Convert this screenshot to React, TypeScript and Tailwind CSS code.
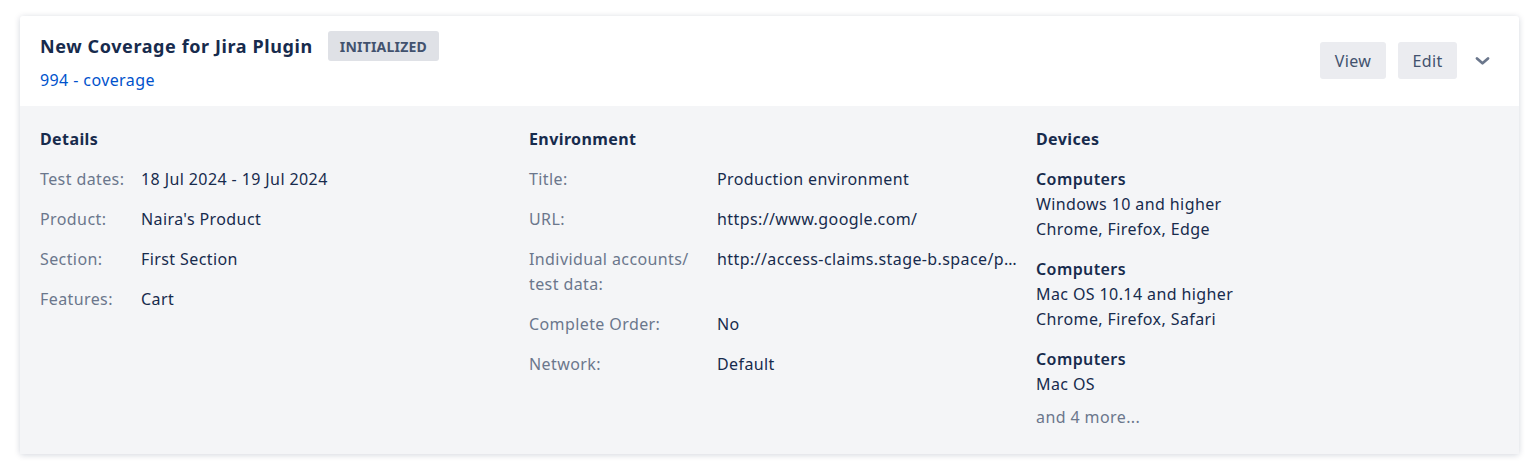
import React from 'react';

const details = [
  ['Test dates:', '18 Jul 2024 - 19 Jul 2024'],
  ['Product:', "Naira's Product"],
  ['Section:', 'First Section'],
  ['Features:', 'Cart'],
];

const environment = [
  ['Title:', 'Production environment'],
  ['URL:', 'https://www.google.com/'],
  ['Individual accounts/ test data:', 'http://access-claims.stage-b.space/pages/login?user=test'],
  ['Complete Order:', 'No'],
  ['Network:', 'Default'],
];

const devices = [
  { type: 'Computers', lines: ['Windows 10 and higher', 'Chrome, Firefox, Edge'] },
  { type: 'Computers', lines: ['Mac OS 10.14 and higher', 'Chrome, Firefox, Safari'] },
  { type: 'Computers', lines: ['Mac OS'] },
];

const App = () => {
  return (
    <div className="min-h-[465px] bg-white pl-5 pr-[17px] pt-4 font-['Noto_Sans',sans-serif] text-[#172b4d]">
      <div className="rounded-[3px] bg-white shadow-[0_1px_6px_rgba(9,30,66,0.18)]">
        {/* header */}
        <div className="flex items-center justify-between pl-5 pr-[29px] pt-[15px] pb-[13px]">
          <div>
            <div className="flex h-[30px] items-center">
              <h2 className="text-[18px] font-bold leading-[25px] tracking-[0.6px]">New Coverage for Jira Plugin</h2>
              <span className="ml-[15px] flex h-[30px] items-center rounded-[3px] bg-[#dfe1e6] px-[12px] text-[14px] font-bold uppercase tracking-[0.2px] text-[#42526e]">
                Initialized
              </span>
            </div>
            <a href="#" className="mt-[7px] block text-[16px] leading-[25px] tracking-[0.4px] text-[#0052cc]">
              994 - coverage
            </a>
          </div>
          <div className="mb-[3px] flex items-center">
            <button className="h-[37px] w-[66px] rounded-[3px] bg-[#ebecf0] text-[16px] tracking-[0.4px] text-[#42526e]">View</button>
            <button className="ml-3 h-[37px] w-[59px] rounded-[3px] bg-[#ebecf0] text-[16px] tracking-[0.4px] text-[#42526e]">Edit</button>
            <svg className="ml-[18px]" width="15" height="10" viewBox="0 0 15 10" fill="none">
              <path d="M2 2.5 L7.5 7.2 L13 2.5" stroke="#6b778c" strokeWidth="2.8" strokeLinecap="round" strokeLinejoin="round" />
            </svg>
          </div>
        </div>

        {/* body */}
        <div className="flex bg-[#f4f5f7] pl-5 pr-5 pt-[21px] pb-[24px] text-[16px] leading-[25px] tracking-[0.4px]">
          <div className="w-[489px] shrink-0 pr-5">
            <h3 className="font-bold">Details</h3>
            <div className="mt-[15px] flex flex-col gap-[15px]">
              {details.map(([label, value]) => (
                <div key={label} className="flex">
                  <span className="w-[101px] shrink-0 text-[#6b778c]">{label}</span>
                  <span>{value}</span>
                </div>
              ))}
            </div>
          </div>

          <div className="w-[507px] shrink-0 pr-4">
            <h3 className="font-bold">Environment</h3>
            <div className="mt-[15px] flex flex-col gap-[15px]">
              {environment.map(([label, value]) => (
                <div key={label} className="flex">
                  <span className="w-[188px] shrink-0 pr-4 text-[#6b778c]">{label}</span>
                  <span className="min-w-0 flex-1 truncate">{value}</span>
                </div>
              ))}
            </div>
          </div>

          <div className="flex-1">
            <h3 className="font-bold">Devices</h3>
            <div className="mt-[15px] flex flex-col gap-[15px]">
              {devices.map((d, i) => (
                <div key={i}>
                  <div className="font-semibold">{d.type}</div>
                  {d.lines.map((l) => (
                    <div key={l}>{l}</div>
                  ))}
                </div>
              ))}
            </div>
            <div className="mt-2 text-[#6b778c]">and 4 more...</div>
          </div>
        </div>
      </div>
    </div>
  );
};

export default App;
